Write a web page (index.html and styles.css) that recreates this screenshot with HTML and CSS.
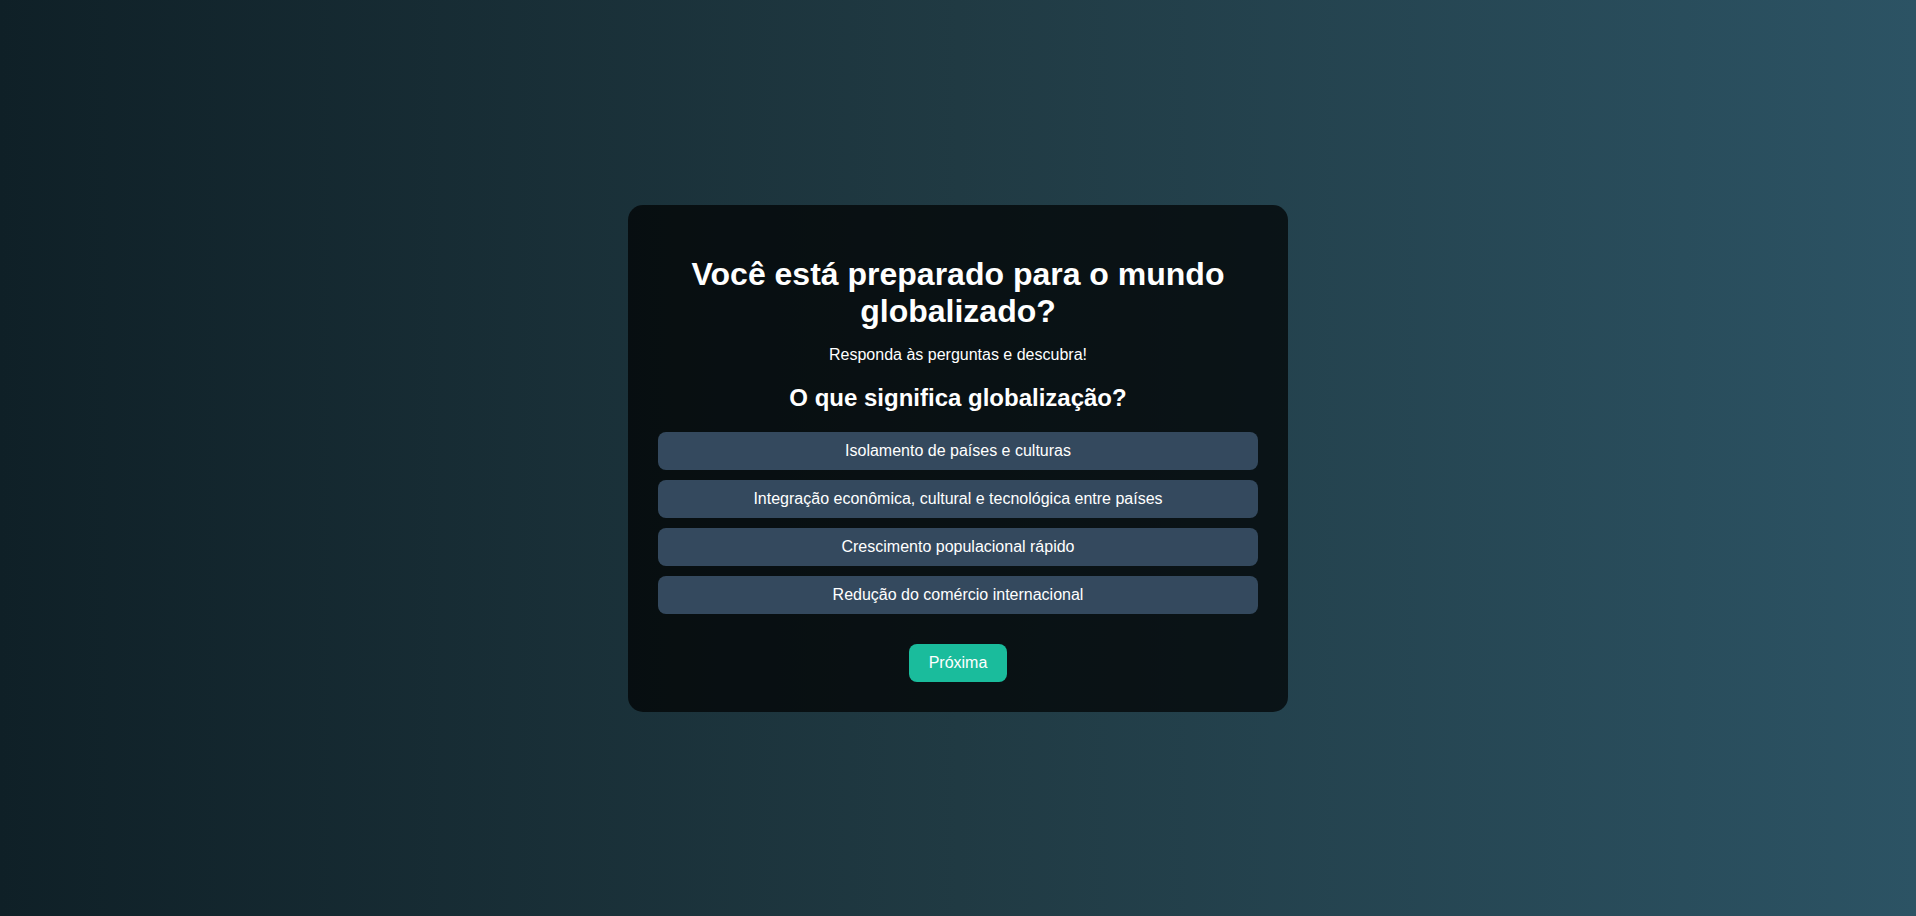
FILE: index.html
```html
<!DOCTYPE html>
<html lang="pt-BR">
<head>
<meta charset="UTF-8">
<title>Quiz Globalização</title>
<link rel="stylesheet" href="styles.css">
</head>
<body>
<main class="quiz">
  <h1 class="title">Você está preparado para o mundo globalizado?</h1>
  <p class="subtitle">Responda às perguntas e descubra!</p>
  <h2 class="question">O que significa globalização?</h2>
  <div class="options">
    <button class="option">Isolamento de países e culturas</button>
    <button class="option">Integração econômica, cultural e tecnológica entre países</button>
    <button class="option">Crescimento populacional rápido</button>
    <button class="option">Redução do comércio internacional</button>
  </div>
  <button class="next">Próxima</button>
</main>
</body>
</html>
```

FILE: styles.css
```css
html, body {
  margin: 0;
  padding: 0;
  height: 100%;
}

body {
  font-family: "Liberation Sans", Arial, sans-serif;
  color: #fff;
  background: linear-gradient(to right, #0f2027, #203a43, #2c5364);
  display: flex;
  align-items: center;
  justify-content: center;
  min-height: 100vh;
}

.quiz {
  width: 600px;
  padding: 30px;
  background: rgba(0, 0, 0, 0.7);
  border-radius: 15px;
  text-align: center;
  display: flex;
  flex-direction: column;
  align-items: center;
}

.title {
  font-size: 32px;
  font-weight: bold;
  margin: 21px 0 16px;
}

.subtitle {
  font-size: 16px;
  margin: 0 0 20px;
}

.question {
  font-size: 24px;
  font-weight: bold;
  margin: 0 0 20px;
}

.options {
  width: 100%;
  display: flex;
  flex-direction: column;
  gap: 10px;
}

.option {
  display: block;
  width: 100%;
  padding: 10px;
  border: none;
  border-radius: 8px;
  background: #34495e;
  color: #fff;
  font-family: "Liberation Sans", Arial, sans-serif;
  font-size: 16px;
  line-height: normal;
  cursor: pointer;
}

.next {
  margin-top: 30px;
  padding: 10px 20px;
  border: none;
  border-radius: 8px;
  background: #1abc9c;
  color: #fff;
  font-family: "Liberation Sans", Arial, sans-serif;
  font-size: 16px;
  line-height: normal;
  cursor: pointer;
}
```
